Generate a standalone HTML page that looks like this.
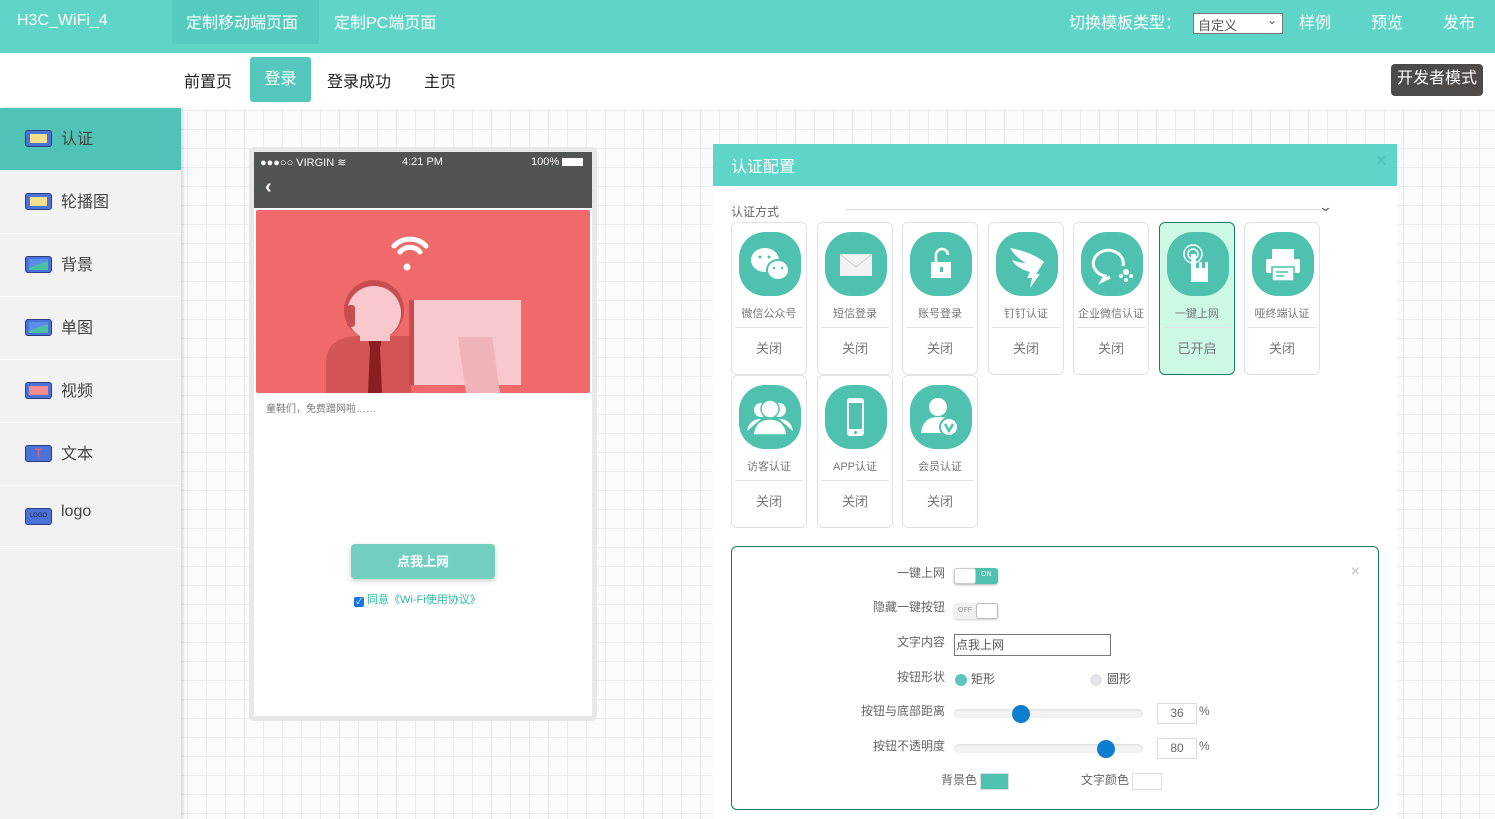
<!DOCTYPE html>
<html><head><meta charset="utf-8">
<style>
*{box-sizing:border-box;margin:0;padding:0}
body{width:1495px;height:819px;overflow:hidden;position:relative;font-family:"Liberation Sans","Noto Sans CJK SC",sans-serif;background:#fbfbfb;
background-image:linear-gradient(#ececec 1px,transparent 1px),linear-gradient(90deg,#ececec 1px,transparent 1px);background-size:19px 19px;background-position:-3px -4px}
.a{position:absolute}
#top{left:0;top:0;width:1495px;height:53px;background:#5fd5c8;color:#fff;font-size:16px}
#sub{left:0;top:53px;width:1495px;height:55px;background:#fff;font-size:16px;color:#222}
#side{left:0;top:108px;width:181px;height:711px;background:#f2f2f2;box-shadow:2px 0 3px rgba(0,0,0,.15)}
.si{height:63px;border-bottom:1px solid #fff;position:relative;font-size:16px;color:#444}
.si .ic{position:absolute;left:25px;top:22px;width:27px;height:17px;border-radius:3px;background:#4a72d8;border:1px solid #2a3d80}
.si span{position:absolute;left:61px;top:17px}
.card{position:absolute;width:76px;height:153px;background:#fff;border:1px solid #e2e2e2;border-radius:6px;text-align:center}
.card .i{position:absolute;left:7px;top:9px;width:62px;height:64px;border-radius:26px;background:#4fc2af}
.card .l{position:absolute;left:0;width:100%;top:82px;font-size:11px;color:#777}
.card .d{position:absolute;left:3px;right:3px;top:104px;border-top:1px solid #e4e4e4}
.card .s{position:absolute;left:0;width:100%;top:115px;font-size:13px;color:#777}
.lb{position:absolute;font-size:12px;color:#666;text-align:right;width:120px}
</style></head><body>
<div id="top" class="a">
 <div class="a" style="left:17px;top:12px;font-size:16px">H3C_WiFi_4</div>
 <div class="a" style="left:172px;top:0;width:147px;height:44px;background:#55cbbf;border-radius:0 0 3px 3px"></div>
 <div class="a" style="left:186px;top:9px">定制移动端页面</div>
 <div class="a" style="left:334px;top:9px">定制PC端页面</div>
 <div class="a" style="left:1069px;top:9px">切换模板类型：</div>
 <div class="a" style="left:1193px;top:13px;width:90px;height:21px;background:#fff;border:1px solid #777;color:#555;font-size:13px;padding:1px 4px">自定义<span style="position:absolute;right:5px;top:-1px;font-size:12px">⌄</span></div>
 <div class="a" style="left:1299px;top:9px">样例</div>
 <div class="a" style="left:1371px;top:9px">预览</div>
 <div class="a" style="left:1443px;top:9px">发布</div>
</div>
<div id="sub" class="a">
 <div class="a" style="left:184px;top:15px">前置页</div>
 <div class="a" style="left:250px;top:4px;width:61px;height:45px;background:#55c7bd;border-radius:3px;color:#fff;text-align:center;line-height:45px">登录</div>
 <div class="a" style="left:327px;top:15px">登录成功</div>
 <div class="a" style="left:424px;top:15px">主页</div>
 <div class="a" style="left:1391px;top:11px;width:92px;height:32px;background:#4e4a48;border-radius:4px;color:#fff;text-align:center;line-height:30px;font-size:16px">开发者模式</div>
</div>
<div id="side" class="a">
 <div class="si" style="background:#4fc3b6"><div class="ic" style="background:#4a72d8"><div style="margin:3px 4px;height:9px;background:#f7e08a"></div></div><span>认证</span></div>
 <div class="si"><div class="ic"><div style="margin:3px 4px;height:9px;background:#f7e08a"></div></div><span>轮播图</span></div>
 <div class="si"><div class="ic"><div style="margin:2px 3px;height:11px;background:linear-gradient(160deg,#5b8de8 50%,#49c0a0 50%)"></div></div><span>背景</span></div>
 <div class="si"><div class="ic"><div style="margin:2px 3px;height:11px;background:linear-gradient(160deg,#5b8de8 50%,#49c0a0 50%)"></div></div><span>单图</span></div>
 <div class="si"><div class="ic"><div style="margin:3px 3px;height:9px;background:#f48a8a"></div></div><span>视频</span></div>
 <div class="si"><div class="ic" style="color:#e4607a;font-size:12px;text-align:center;line-height:15px;font-weight:bold">T</div><span>文本</span></div>
 <div class="si"><div class="ic" style="color:#223;font-size:6px;text-align:center;line-height:15px">LOGO</div><span>logo</span></div>
</div>
<!-- phone -->
<div class="a" style="left:249px;top:147px;width:348px;height:574px;background:#fff;border:5px solid #e8e8e8;border-radius:5px"></div>
<div class="a" style="left:254px;top:152px;width:338px;height:56px;background:#505452;color:#fff;font-size:11px">
 <div class="a" style="left:6px;top:4px">●●●○○ VIRGIN ≋</div>
 <div class="a" style="left:148px;top:4px">4:21 PM</div>
 <div class="a" style="left:277px;top:4px">100% <span style="display:inline-block;width:21px;height:8px;background:#fff;vertical-align:-1px"></span></div>
 <div class="a" style="left:11px;top:24px;font-size:20px;font-weight:bold">‹</div>
</div>
<div class="a" style="left:256px;top:210px;width:334px;height:183px;background:#f06a6b;border-radius:2px;overflow:hidden">
 <svg width="334" height="183">
  <path d="M138 36a22 22 0 0 1 32 0M144 42a13 13 0 0 1 20 0" stroke="#fff" stroke-width="5" fill="none" stroke-linecap="round"/><circle cx="151" cy="57" r="3.5" fill="#fff"/>
  <path d="M70 183v-30q0-25 30-27h55v57z" fill="#d35556"/>
  <rect x="155" y="90" width="110" height="85" fill="#f8c8cc"/>
  <rect x="153" y="90" width="5" height="85" fill="#c94a4e"/>
  <path d="M202 127h34l8 56h-34z" fill="#eeb4b8"/>
  <circle cx="118" cy="100" r="30" fill="#c84d50"/>
  <circle cx="118" cy="103" r="27" fill="#f8c8cc"/>
  <rect x="91" y="95" width="8" height="22" rx="3" fill="#c84d50"/>
  <path d="M112 128h14l-2 10 2 45h-14l2-45z" fill="#8a1f22"/>
  <rect x="104" y="123" width="30" height="8" fill="#f8c8cc"/>
 </svg>
</div>
<div class="a" style="left:266px;top:400px;font-size:10px;color:#777">童鞋们，免费蹭网啦……</div>
<div class="a" style="left:351px;top:544px;width:144px;height:35px;background:#72cfc0;border-radius:4px;box-shadow:0 2px 6px rgba(0,0,0,.2);color:#fff;text-align:center;line-height:35px;font-size:13px;font-weight:bold">点我上网</div>
<div class="a" style="left:354px;top:591px;font-size:11px;color:#2cbba0"><span style="display:inline-block;width:10px;height:10px;background:#1a73e8;border-radius:2px;vertical-align:-1px;color:#fff;font-size:8px;line-height:10px;text-align:center">✓</span> 同意《Wi-Fi使用协议》</div>
<!-- config panel -->
<div class="a" style="left:713px;top:186px;width:684px;height:633px;background:#fff"></div>
<div class="a" style="left:713px;top:144px;width:684px;height:42px;background:#5fd5c8;color:#fff;font-size:16px">
 <div class="a" style="left:18px;top:9px">认证配置</div>
 <div class="a" style="right:10px;top:6px;color:#4fc8bb;font-size:20px;font-weight:bold">×</div>
</div>
<div class="a" style="left:731px;top:203px;font-size:12px;color:#666">认证方式</div>
<div class="a" style="left:845px;top:209px;width:475px;border-top:1px solid #ddd"></div>
<div class="a" style="left:1320px;top:199px;font-size:13px;color:#666;transform:scaleX(1.4)">⌄</div>

<div class="card" style="left:731px;top:222px"><div class="i"><svg width="62" height="64"><ellipse cx="26" cy="28" rx="14" ry="12" fill="#fff"/><ellipse cx="39" cy="38" rx="11" ry="10" fill="#fff" stroke="#4fc2af" stroke-width="2"/><circle cx="21" cy="25" r="1.5" fill="#4fc2af"/><circle cx="30" cy="25" r="1.5" fill="#4fc2af"/><circle cx="35" cy="36" r="1.3" fill="#4fc2af"/><circle cx="43" cy="36" r="1.3" fill="#4fc2af"/></svg></div><div class="l">微信公众号</div><div class="d"></div><div class="s">关闭</div></div>
<div class="card" style="left:817px;top:222px"><div class="i"><svg width="62" height="64"><rect x="15" y="22" width="32" height="22" fill="#f2f2f2"/><path d="M15 22l16 13 16-13" stroke="#ccc" fill="none"/></svg></div><div class="l">短信登录</div><div class="d"></div><div class="s">关闭</div></div>
<div class="card" style="left:902px;top:222px"><div class="i"><svg width="62" height="64"><path d="M26 30v-7a6 6 0 0 1 12 0" stroke="#fff" stroke-width="2.5" fill="none"/><rect x="21" y="30" width="20" height="16" fill="#fff"/><rect x="30" y="35" width="3" height="5" fill="#4fc2af"/></svg></div><div class="l">账号登录</div><div class="d"></div><div class="s">关闭</div></div>
<div class="card" style="left:988px;top:222px"><div class="i"><svg width="62" height="64"><path d="M14 16q22 4 34 14l-8 12 4 0-10 14 2-10-5 0 3-6q-14-4-18-12 8 3 14 3-10-5-16-15z" fill="#fff"/></svg></div><div class="l">钉钉认证</div><div class="d"></div><div class="s">关闭</div></div>
<div class="card" style="left:1073px;top:222px"><div class="i"><svg width="62" height="64"><path d="M42 34a15 13 0 1 0-18 10l-3 5 8-4" stroke="#fff" stroke-width="3" fill="none"/><circle cx="45" cy="40" r="3" fill="#fff"/><circle cx="40" cy="44" r="2" fill="#fff"/><circle cx="50" cy="44" r="2" fill="#fff"/><circle cx="45" cy="48" r="2" fill="#fff"/></svg></div><div class="l">企业微信认证</div><div class="d"></div><div class="s">关闭</div></div>
<div class="card" style="left:1159px;top:222px;background:#cdf8e4;border-color:#1a7a6a"><div class="i"><svg width="62" height="64"><circle cx="26" cy="22" r="9" stroke="#fff" stroke-width="1.5" fill="none"/><circle cx="26" cy="22" r="5" stroke="#fff" stroke-width="1.5" fill="none"/><path d="M24 22h5v14h3v-6h3v6h3v-6h3v20h-17z" fill="#fff"/></svg></div><div class="l">一键上网</div><div class="d"></div><div class="s">已开启</div></div>
<div class="card" style="left:1244px;top:222px"><div class="i"><svg width="62" height="64"><rect x="20" y="17" width="22" height="10" fill="#fff"/><rect x="14" y="27" width="34" height="14" rx="2" fill="#fff"/><rect x="20" y="35" width="22" height="14" fill="#fff" stroke="#4fc2af" stroke-width="1.5"/><path d="M24 40h12M24 44h8" stroke="#4fc2af" stroke-width="1.5"/></svg></div><div class="l">哑终端认证</div><div class="d"></div><div class="s">关闭</div></div>
<div class="card" style="left:731px;top:375px"><div class="i"><svg width="62" height="64"><circle cx="22" cy="25" r="7" fill="#fff"/><circle cx="40" cy="25" r="7" fill="#fff"/><path d="M8 46q2-12 14-12M54 46q-2-12-14-12" fill="#fff"/><circle cx="31" cy="24" r="9" fill="#fff" stroke="#4fc2af" stroke-width="1.5"/><path d="M14 50q2-16 17-16t17 16z" fill="#fff" stroke="#4fc2af" stroke-width="1.5"/></svg></div><div class="l">访客认证</div><div class="d"></div><div class="s">关闭</div></div>
<div class="card" style="left:817px;top:375px"><div class="i"><svg width="62" height="64"><rect x="22" y="13" width="17" height="38" rx="3" fill="#fff"/><rect x="24" y="18" width="13" height="26" fill="#4fc2af"/><circle cx="30.5" cy="47.5" r="1.5" fill="#4fc2af"/></svg></div><div class="l">APP认证</div><div class="d"></div><div class="s">关闭</div></div>
<div class="card" style="left:902px;top:375px"><div class="i"><svg width="62" height="64"><circle cx="28" cy="22" r="9" fill="#fff"/><path d="M11 48q2-16 17-16t12 8v8z" fill="#fff"/><circle cx="39" cy="42" r="9" fill="#fff" stroke="#4fc2af" stroke-width="2"/><path d="M35 39l4 7 4-7" stroke="#4fc2af" stroke-width="2.5" fill="none"/></svg></div><div class="l">会员认证</div><div class="d"></div><div class="s">关闭</div></div>

<!-- settings box -->
<div class="a" style="left:731px;top:546px;width:648px;height:264px;border:1px solid #1a7a6a;border-radius:6px;background:#fff">
 <div class="a" style="right:18px;top:16px;color:#bbb;font-size:16px">×</div>
</div>
<div class="lb" style="left:825px;top:564px">一键上网</div>
<div class="a" style="left:954px;top:568px;width:44px;height:16px;border-radius:3px;background:#4fc2af;box-shadow:0 1px 2px rgba(0,0,0,.3)"><div style="position:absolute;left:0;top:0;width:22px;height:16px;background:#fff;border-radius:3px;border:1px solid #ccc"></div><span style="position:absolute;left:27px;top:3px;font-size:7px;color:#fff">ON</span></div>
<div class="lb" style="left:825px;top:598px">隐藏一键按钮</div>
<div class="a" style="left:954px;top:603px;width:44px;height:16px;border-radius:3px;background:#f0f0f0;box-shadow:0 1px 2px rgba(0,0,0,.2)"><span style="position:absolute;left:4px;top:4px;font-size:7px;color:#999">OFF</span><div style="position:absolute;right:0;top:0;width:22px;height:16px;background:#fff;border-radius:3px;border:1px solid #bbb"></div></div>
<div class="lb" style="left:825px;top:633px">文字内容</div>
<div class="a" style="left:954px;top:634px;width:157px;height:22px;border:1px solid #777;font-size:12px;color:#555;padding:1px 1px">点我上网</div>
<div class="lb" style="left:825px;top:668px">按钮形状</div>
<div class="a" style="left:955px;top:674px;width:12px;height:12px;border-radius:50%;background:#5fc5bb"></div>
<div class="a" style="left:971px;top:670px;font-size:12px;color:#555">矩形</div>
<div class="a" style="left:1090px;top:674px;width:12px;height:12px;border-radius:50%;background:#e4e4e8"></div>
<div class="a" style="left:1107px;top:670px;font-size:12px;color:#555">圆形</div>
<div class="lb" style="left:825px;top:702px">按钮与底部距离</div>
<div class="a" style="left:954px;top:709px;width:189px;height:9px;border-radius:5px;background:#f3f3f3;box-shadow:inset 0 1px 2px rgba(0,0,0,.1)"></div>
<div class="a" style="left:1012px;top:705px;width:18px;height:18px;border-radius:50%;background:#0d7ecf"></div>
<div class="a" style="left:1157px;top:703px;width:40px;height:21px;border:1px solid #ddd;font-size:12px;color:#666;text-align:center;line-height:19px">36</div>
<div class="a" style="left:1199px;top:704px;font-size:12px;color:#666">%</div>
<div class="lb" style="left:825px;top:737px">按钮不透明度</div>
<div class="a" style="left:954px;top:744px;width:189px;height:9px;border-radius:5px;background:#f3f3f3;box-shadow:inset 0 1px 2px rgba(0,0,0,.1)"></div>
<div class="a" style="left:1097px;top:740px;width:18px;height:18px;border-radius:50%;background:#0d7ecf"></div>
<div class="a" style="left:1157px;top:738px;width:40px;height:21px;border:1px solid #ddd;font-size:12px;color:#666;text-align:center;line-height:19px">80</div>
<div class="a" style="left:1199px;top:739px;font-size:12px;color:#666">%</div>
<div class="a" style="left:941px;top:771px;font-size:12px;color:#666">背景色</div>
<div class="a" style="left:980px;top:773px;width:29px;height:17px;background:#4fc2af;border:1px solid #ddd"></div>
<div class="a" style="left:1081px;top:771px;font-size:12px;color:#666">文字颜色</div>
<div class="a" style="left:1132px;top:773px;width:30px;height:17px;background:#fff;border:1px solid #ddd"></div>
</body></html>
